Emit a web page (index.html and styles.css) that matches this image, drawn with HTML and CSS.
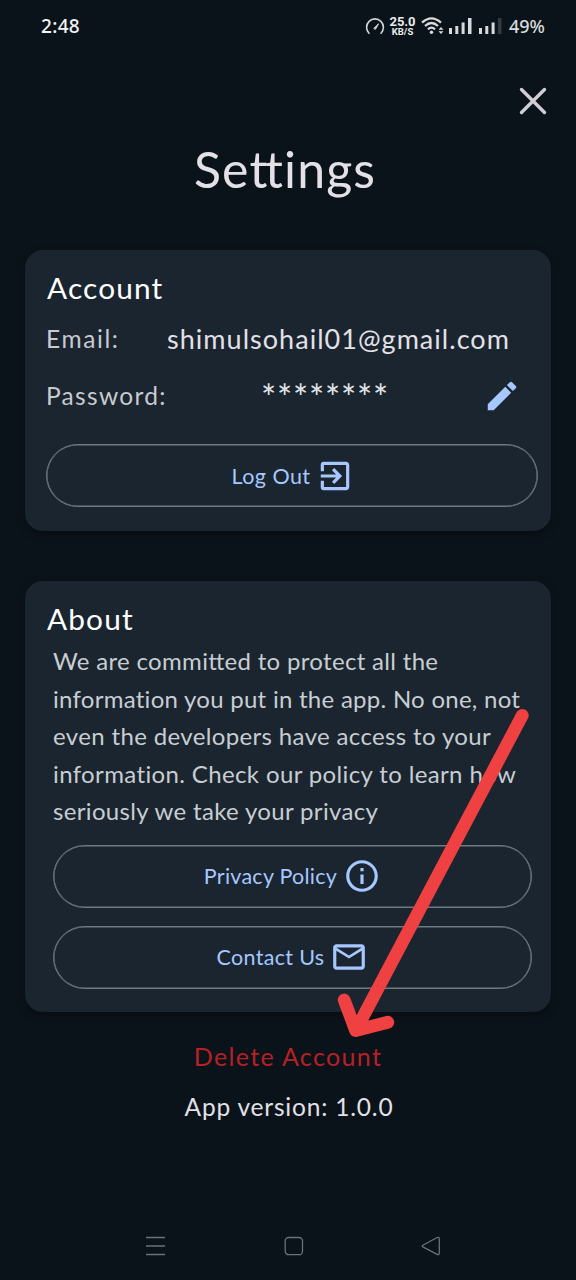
FILE: index.html
```html
<!DOCTYPE html>
<html lang="en">
<head>
<meta charset="utf-8">
<title>Settings</title>
<link rel="stylesheet" href="styles.css">
</head>
<body>
<div class="screen">
  <header class="status">
    <span class="clock">2:48</span>
    <div class="status-right">
      <svg class="gauge" width="20" height="18" viewBox="0 0 20 18" fill="none" stroke="#d2d5d8" stroke-width="1.6" stroke-linecap="round"><path d="M4 16.2A8.4 8.4 0 1 1 16 16.2"/><path d="M9 11.2L13.6 6.8L10.6 12Z" fill="#d2d5d8" stroke-width="1"/></svg>
      <span class="speed"><b class="rate">25.0</b><b class="unit">KB/S</b></span>
      <svg class="wifi" width="23" height="18" viewBox="0 0 23 18" fill="none" stroke="#d8dbde" stroke-width="2.3"><path d="M1 5.6Q10.500-2.800 20 5.600"/><path d="M4 9Q10.500 3 17 9"/><path d="M7 12.300Q10.500 9 14 12.300"/><circle cx="10.500" cy="15.300" r="1.700" fill="#d8dbde" stroke="none"/><path d="M17.500 12.800L20 10L22.500 12.800ZM17.500 14.200L20 17L22.500 14.200Z" fill="#d8dbde" stroke="none"/></svg>
      <svg class="signal" width="23" height="16" viewBox="0 0 23 16" fill="#d8dbde"><path d="M0 10h3v6h-3zM6.300 8h3v8h-3zM12.600 4.500h3v11.500h-3zM19 0h3.500v16H19z"/></svg>
      <svg class="signal-two" width="23" height="16" viewBox="0 0 23 16" fill="#d8dbde"><path d="M0 10h3v6h-3zM6.300 8h3v8h-3zM12.600 4.500h3v11.500h-3z"/><path fill="#343b42" d="M19 0h3.500v16H19z"/></svg>
      <span class="battery">49%</span>
    </div>
  </header>

  <div class="close-row">
    <svg width="28" height="28" viewBox="0 0 28 28" fill="none" stroke="#d0cdd7" stroke-width="3.4" stroke-linecap="round"><path d="M2.500 2.500L25.500 25.500M25.500 2.500L2.500 25.500"/></svg>
  </div>
  <h1 class="title">Se<span class="joined">t</span>tings</h1>

  <section class="card account">
    <h2 class="heading heading-account">Account</h2>
    <div class="field"><span class="label label-email">Email:</span><span class="email">shimulsohail01@gmail.com</span></div>
    <div class="field field-password"><span class="label label-password">Password:</span><span class="stars">********</span>
      <svg class="pencil" width="38" height="38" viewBox="0 0 24 24" fill="#a6c8ff"><path d="M3 17.250V21h3.750L17.810 9.940l-3.750-3.750L3 17.250zM20.710 7.040a.996.996 0 0 0 0-1.410l-2.340-2.340a.996.996 0 0 0-1.410 0l-1.830 1.830 3.750 3.750 1.830-1.830z"/></svg>
    </div>
    <div class="pill"><span class="logout-text">Log Out</span>
      <svg width="38" height="38" viewBox="0 0 24 24" fill="#a6c8ff"><path d="M10.090 15.590L11.500 17l5-5-5-5-1.410 1.410L12.670 11H3v2h9.670l-2.580 2.590zM19 3H5a2 2 0 0 0-2 2v4h2V5h14v14H5v-4H3v4a2 2 0 0 0 2 2h14c1.100 0 2-.900 2-2V5c0-1.100-.900-2-2-2z"/></svg>
    </div>
  </section>

  <section class="card about">
    <h2 class="heading heading-about">About</h2>
    <p class="copy"><span class="line l1">We are commi<span class="joined">t</span>ted to protect all the</span><span class="line l2">information you put in the app. No one, not</span><span class="line l3">even the developers have access to your</span><span class="line l4">information. Check our policy to learn how</span><span class="line l5">seriously we take your privacy</span></p>
    <div class="pill"><span class="privacy-text">Privacy Policy</span>
      <svg width="38" height="38" viewBox="0 0 24 24" fill="#a6c8ff"><path d="M11 7h2v2h-2zm0 4h2v6h-2zm1-9C6.480 2 2 6.480 2 12s4.480 10 10 10 10-4.480 10-10S17.520 2 12 2zm0 18c-4.410 0-8-3.590-8-8s3.590-8 8-8 8 3.590 8 8-3.590 8-8 8z"/></svg>
    </div>
    <div class="pill"><span class="contact-text">Contact Us</span>
      <svg width="38" height="38" viewBox="0 0 24 24" fill="#a6c8ff"><path d="M22 6c0-1.100-.900-2-2-2H4c-1.100 0-2 .900-2 2v12c0 1.100.900 2 2 2h16c1.100 0 2-.900 2-2V6zm-2 0l-8 5-8-5h16zm0 12H4V8l8 5 8-5v10z"/></svg>
    </div>
  </section>

  <div class="delete"><span>Delete Account</span></div>
  <div class="version"><span>App version: 1.0.0</span></div>

  <nav class="nav">
    <svg width="20" height="20" viewBox="0 0 20 20" fill="none" stroke="#6b7177" stroke-width="1.300"><path d="M0 1.500h19M0 10h19M0 18.500h19"/></svg>
    <svg width="20" height="20" viewBox="0 0 20 20" fill="none" stroke="#6b7177" stroke-width="1.300"><rect x="1.200" y="1.500" width="17.300" height="17.200" rx="3.500"/></svg>
    <svg width="20" height="20" viewBox="0 0 20 20" fill="none" stroke="#6b7177" stroke-width="1.300" stroke-linejoin="round"><path d="M1.800 9.200L16.200 1.500Q18.300 .800 18.300 3V17Q18.300 19.200 16.200 18.300L1.800 10.800Q.500 10 1.800 9.200Z"/></svg>
  </nav>

  <svg class="arrow" width="576" height="1280" viewBox="0 0 576 1280" fill="none" stroke="#ef4141" stroke-width="12.800" stroke-linecap="round" stroke-linejoin="round"><path d="M522.300 715.300L356 1030M344.200 1000L355.600 1030.500L387.800 1022.200"/></svg>
</div>
</body>
</html>
```
FILE: styles.css
```css
* { box-sizing: border-box; }
body { margin: 0; background: #0b131a; }
svg { display: block; flex: none; }
.screen {
  position: relative;
  width: 576px;
  height: 1280px;
  overflow: hidden;
  display: flex;
  flex-direction: column;
  font-family: Lato, "Open Sans", sans-serif;
  color: #e3e1e7;
  white-space: nowrap;
}
.status {
  height: 52px;
  padding: 0 31px 0 41px;
  display: flex;
  align-items: center;
  justify-content: space-between;
  font-family: "Noto Sans", Roboto, sans-serif;
}
.clock { font-size: 19px; font-weight: 500; letter-spacing: .3px; color: #f2f3f4; }
.status-right { display: flex; align-items: center; }
.speed { width: 27px; margin-left: 4px; display: flex; flex-direction: column; align-items: center; font-family: Roboto, sans-serif; color: #e9ebec; }
.rate { font-size: 13px; line-height: 11px; }
.unit { font-size: 9.500px; line-height: 9px; }
.wifi { margin-left: 5px; }
.signal { margin-left: 5px; }
.signal-two { margin-left: 7px; }
.battery { width: 36px; margin-left: 7px; font-size: 18px; font-weight: 500; color: #d8dbde; }
.close-row { height: 98px; padding: 35px 29px 0; display: flex; justify-content: flex-end; }
.title { height: 100px; margin: 0; padding: 1px 6px 0 0; text-align: center; font-size: 50px; line-height: 36px; font-weight: 400; letter-spacing: 1.100px; }
.joined { letter-spacing: -.05em; }
.card {
  flex: none;
  margin: 0 25px;
  border-radius: 18px;
  background: #1a252f;
  box-shadow: 0 3px 8px rgba(0, 0, 0, .4);
}
.account { height: 281px; padding: 20px 13px 24px 21px; }
.about { height: 431px; margin-top: 50px; padding: 20px 19px 24px 28px; }
.heading { margin: 0; font-weight: 400; font-size: 29.800px; line-height: 36px; letter-spacing: 1.150px; color: #fff; }
.heading-account { margin-left: 1px; }
.heading-about { margin-left: -6px; }
.field { height: 65px; line-height: 40px; display: flex; align-items: center; }
.field-password { height: 49px; }
.label { flex: none; font-size: 24.500px; letter-spacing: 1.300px; color: #c8cad0; }
.label-email { width: 121px; letter-spacing: 1.600px; }
.email { font-size: 27px; letter-spacing: 1.030px; }
.label-password { width: 215px; }
.stars { flex: none; width: 222px; font-size: 36px; letter-spacing: .700px; padding-top: 3px; }
.pill {
  height: 63px;
  border: 1px solid #737980;
  box-shadow: inset 0 0 0 .5px #737980;
  border-radius: 32px;
  display: flex;
  align-items: center;
  justify-content: center;
  gap: 6px;
  color: #a6c8ff;
  font-size: 21.500px;
}
.logout-text { letter-spacing: .450px; }
.privacy-text { letter-spacing: .260px; }
.contact-text { letter-spacing: .320px; }
.account .pill { margin-top: 24px; padding-left: 2px; }
.copy { margin: 5px 0 15px; font-size: 24px; line-height: 37.600px; color: #c8cdd2; }
.line { display: block; }
.l1 { letter-spacing: .320px; }
.l2 { letter-spacing: .270px; }
.l3 { letter-spacing: .360px; }
.l4 { letter-spacing: .370px; }
.l5 { letter-spacing: .340px; }
.about .pill + .pill { margin-top: 18px; }
.delete { height: 30px; margin-top: 29px; text-align: center; font-size: 25px; line-height: 30px; letter-spacing: 1.350px; color: #b72025; }
.version { height: 30px; margin-top: 21px; padding-left: 2px; text-align: center; font-size: 24.500px; line-height: 30px; letter-spacing: .800px; }
.nav { margin: 114px 135px 0 146px; display: flex; justify-content: space-between; }
.arrow { position: absolute; inset: 0; }
```
